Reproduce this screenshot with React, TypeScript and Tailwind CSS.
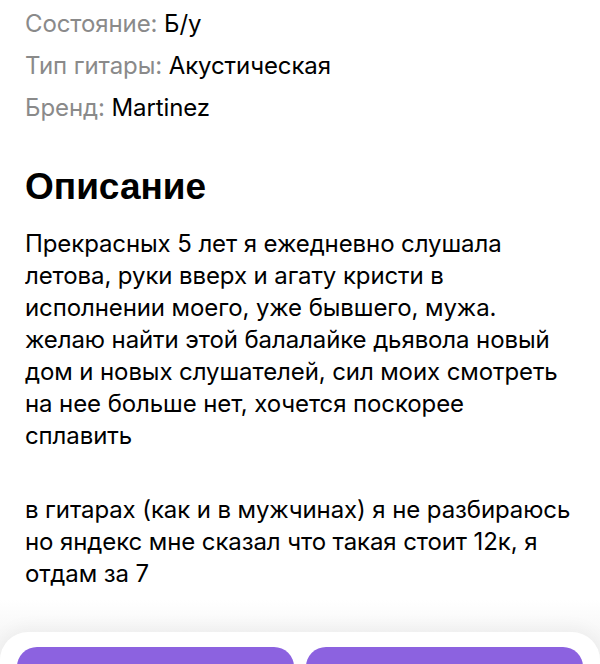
const attributes = [
  { label: "Состояние", value: "Б/у" },
  { label: "Тип гитары", value: "Акустическая" },
  { label: "Бренд", value: "Martinez" },
];

const description = [
  [
    "Прекрасных 5 лет я ежедневно слушала",
    "летова, руки вверх и агату кристи в",
    "исполнении моего, уже бывшего, мужа.",
    "желаю найти этой балалайке дьявола новый",
    "дом и новых слушателей, сил моих смотреть",
    "на нее больше нет, хочется поскорее",
    "сплавить",
  ],
  [
    "в гитарах (как и в мужчинах) я не разбираюсь",
    "но яндекс мне сказал что такая стоит 12к, я",
    "отдам за 7",
  ],
];

export default function App() {
  return (
    <div className="relative w-[600px] h-[664px] overflow-hidden bg-white font-['Inter',sans-serif] text-black">
      <div className="px-[25px] pt-[8px]">
        <div className="flex flex-col gap-[10px]">
          {attributes.map((a) => (
            <div key={a.label} className="text-[24px] leading-[32px] tracking-[-0.1px]">
              <span className="text-[#8a8a8a]">{a.label}: </span>
              <span>{a.value}</span>
            </div>
          ))}
        </div>

        <h2 className="mt-[41px] text-[37px] leading-[44px] font-bold font-['Liberation_Sans',sans-serif]">
          Описание
        </h2>

        <div className="mt-[19px] text-[24px] leading-[32px] tracking-[-0.1px]">
          {description.map((lines, i) => (
            <p key={i} className={i > 0 ? "mt-[42px]" : ""}>
              {lines.map((l) => (
                <span key={l} className="block whitespace-nowrap">
                  {l}
                </span>
              ))}
            </p>
          ))}
        </div>
      </div>

      {/* bottom action bar */}
      <div className="absolute left-0 right-0 bottom-0 h-[64px] bg-gradient-to-b from-white to-[#f0f0f0]" />
      <div className="absolute left-0 right-0 bottom-0 h-[32px] rounded-t-[28px] bg-white px-[17px] pt-[15px] shadow-[0_-6px_16px_rgba(0,0,0,0.04)]">
        <div className="flex gap-[12px]">
          <button className="flex-1 h-[56px] rounded-[20px] bg-[#8c62e0]" />
          <button className="flex-1 h-[56px] rounded-[20px] bg-[#8c62e0]" />
        </div>
      </div>
    </div>
  );
}
